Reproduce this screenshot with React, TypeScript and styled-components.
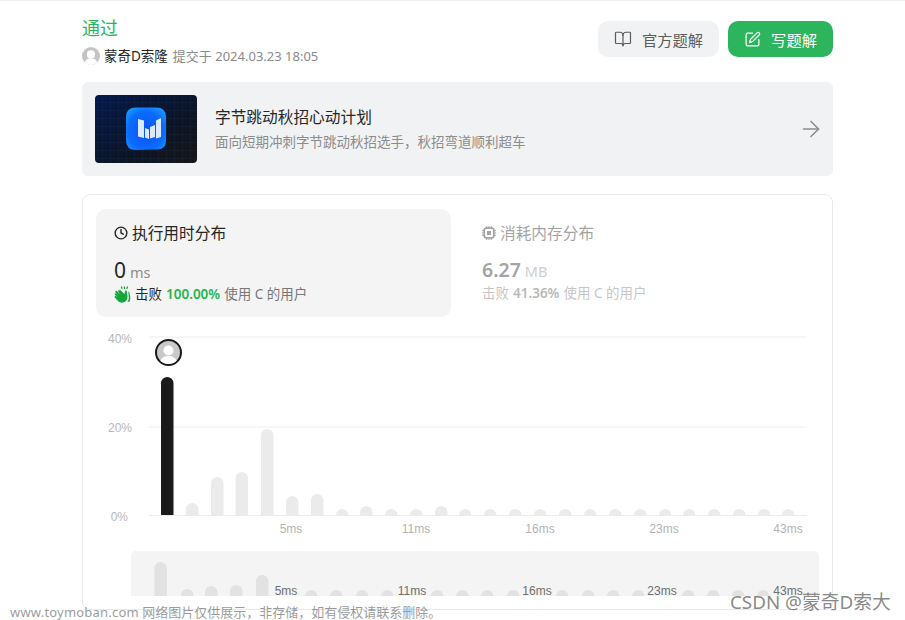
import React from "react";
import styled, { createGlobalStyle } from "styled-components";
import { ArrowRight, BookOpen, Clock, SquarePen } from "lucide-react";

const FONT = `"Noto Sans", "Noto Sans CJK SC", "Liberation Sans", sans-serif`;

const GlobalStyle = createGlobalStyle`
  html, body {
    margin: 0;
    height: 100%;
    overflow: hidden;
    background: #fff;
    font-family: ${FONT};
  }
`;

const Page = styled.div`
  position: relative;
  height: 620px;
  border-top: 1px solid #eeeeee;
  box-sizing: border-box;
  overflow: hidden;
`;

const Container = styled.main`
  width: 751px;
  margin-left: 82px;
`;

const Header = styled.header`
  display: flex;
  justify-content: space-between;
  align-items: flex-start;
  padding-top: 15px;
  height: 81px;
  box-sizing: border-box;
`;

const Status = styled.div`
  font-size: 18px;
  line-height: 24px;
  color: #2db55d;
`;

const Submitter = styled.div`
  display: flex;
  align-items: center;
  margin-top: 6px;
  font-size: 13px;
  line-height: 20px;
  color: #8a8a8a;
`;

const UserName = styled.span`
  font-size: 13.500px;
  color: #262626;
  margin: 0 5px 0 4px;
`;

const Actions = styled.div`
  display: flex;
  gap: 9px;
  margin-top: 5px;
`;

const ActionButton = styled.button<{ $primary?: boolean }>`
  display: flex;
  align-items: center;
  gap: 10px;
  height: 36px;
  padding: 0 16px;
  border: none;
  border-radius: 10px;
  font-family: ${FONT};
  font-size: 15.300px;
  background: ${(p) => (p.$primary ? "#2db55d" : "#f1f2f4")};
  color: ${(p) => (p.$primary ? "#ffffff" : "#5c5c5c")};
`;

const Banner = styled.section`
  display: flex;
  align-items: center;
  height: 94px;
  padding: 0 13px;
  box-sizing: border-box;
  background: #f1f2f4;
  border-radius: 6px;
`;

const BannerText = styled.div`
  flex: 1;
  margin-left: 18px;
`;

const BannerTitle = styled.div`
  font-size: 15.700px;
  line-height: 22px;
  color: #262626;
`;

const BannerSub = styled.div`
  margin-top: 4px;
  font-size: 13.500px;
  line-height: 20px;
  color: #8c8c8c;
`;

const BannerArrow = styled(ArrowRight)`
  color: #8c8c8c;
  margin-right: -4px;
`;

const ResultCard = styled.section`
  margin-top: 18px;
  height: 416px;
  box-sizing: border-box;
  padding: 14px 13px 0;
  border: 1px solid #eaeaea;
  border-radius: 8px;
`;

const Stats = styled.div`
  display: grid;
  grid-template-columns: 355px 354px;
  gap: 14px;
`;

const Stat = styled.div<{ $active?: boolean }>`
  height: 108px;
  box-sizing: border-box;
  padding: 13px 18px 0;
  padding-left: ${(p) => (p.$active ? 18 : 17)}px;
  border-radius: 10px;
  background: ${(p) => (p.$active ? "#f4f4f4" : "transparent")};
  opacity: ${(p) => (p.$active ? 1 : 0.42)};
`;

const StatTitle = styled.div`
  display: flex;
  align-items: center;
  gap: 4px;
  font-size: 15.700px;
  line-height: 22px;
  color: #262626;
`;

const StatValue = styled.div`
  display: flex;
  align-items: baseline;
  gap: 4px;
  margin-top: 13px;
  line-height: 26px;
`;

const Number = styled.span<{ $bold?: boolean }>`
  font-size: ${(p) => (p.$bold ? 19.500 : 21)}px;
  font-weight: ${(p) => (p.$bold ? 600 : 400)};
  color: #262626;
`;

const Unit = styled.span`
  font-size: 14.500px;
  color: #8c8c8c;
`;

const StatFoot = styled.div`
  display: flex;
  align-items: center;
  gap: 3px;
  margin-top: -1px;
  font-size: 13.500px;
  line-height: 20px;
  color: #777777;
`;

const Dark = styled.span`
  color: #262626;
`;

const Percent = styled.span<{ $green?: boolean }>`
  font-weight: 600;
  margin: 0 4px;
  color: ${(p) => (p.$green ? "#1cb84f" : "#555555")};
`;

const Chart = styled.svg`
  display: block;
  margin-top: 8px;
  font-family: "Liberation Sans", Arial, sans-serif;
  font-size: 12px;
`;

const WebNote = styled.div`
  position: absolute;
  left: 10px;
  top: 602px;
  font-size: 13px;
  line-height: 18px;
  color: rgba(110, 110, 110, 0.7);
  white-space: nowrap;
`;

const SiteName = styled.span`
  letter-spacing: 0.2px;
`;

const CsdnMark = styled.div`
  position: absolute;
  left: 730px;
  top: 588px;
  font-size: 18.800px;
  line-height: 26px;
  color: rgba(105, 105, 105, 0.8);
  white-space: nowrap;
`;

const Avatar = () => (
  <svg width="18" height="18" viewBox="0 0 18 18">
    <circle cx="9" cy="9" r="9" fill="#c4c4c4" />
    <circle cx="9" cy="7.400" r="4.100" fill="#fff" />
    <path d="M2.800 15.600c.6-3 3-4.400 6.200-4.400s5.600 1.400 6.200 4.400A9 9 0 0 1 9 18a9 9 0 0 1-6.200-2.400z" fill="#fff" />
  </svg>
);

const Thumb = () => (
  <svg width="102" height="68" viewBox="0 0 102 68">
    <defs>
      <linearGradient id="thumbBg" x1="0" y1="0" x2="1" y2="1">
        <stop offset="0" stopColor="#04194a" />
        <stop offset="0.6" stopColor="#0c1526" />
        <stop offset="1" stopColor="#161616" />
      </linearGradient>
      <radialGradient id="thumbIcon" cx="0.5" cy="0.55" r="0.75">
        <stop offset="0" stopColor="#0b50f2" />
        <stop offset="0.6" stopColor="#0a6cff" />
        <stop offset="1" stopColor="#23b0ff" />
      </radialGradient>
      <pattern id="thumbGrid" width="8" height="8" patternUnits="userSpaceOnUse">
        <path d="M8 0V8M0 8H8" stroke="#2c4a78" strokeWidth="0.6" opacity="0.4" />
      </pattern>
    </defs>
    <rect width="102" height="68" rx="4" fill="url(#thumbBg)" />
    <rect width="102" height="68" rx="4" fill="url(#thumbGrid)" />
    <path d="M41 12.500H61Q71 12.500 71 22V46Q71 55 61 54.500L41 55Q31 55 31 45V22Q31 12.500 41 12.500Z" fill="url(#thumbIcon)" />
    <path d="M43 24l6 1.500V43l-6-1.500zM50 33l4 1.500V44l-4-1.500zM55 32l5-2V42l-5 1.500zM61 25.500l5-2.500V42l-5 1.500z" fill="#dbe9ff" />
  </svg>
);

const Clap = () => (
  <svg width="18" height="18" viewBox="0 0 18 18" fill="#15a63c">
    <path d="M5.600 4.600l4.900 4.300.5-2.600c.2-1.100 1.800-1 1.900.1l.5 4.800c.3 3-1.500 5.800-4.400 6.400-1.900.4-3.700-.2-5-1.500L.8 12.400c-.8-.8.4-2 1.200-1.200l1.700 1.500-2.800-3c-.8-.9.4-2.100 1.300-1.300l2.900 2.800-3.500-3.800c-.8-.9.4-2.100 1.300-1.300l3.700 3.600-2.300-3c-.7-1 .5-2 1.300-1.100z" />
    <path d="M14.300 6.500c.5 0 .9.300 1 .8l.9 4.300c.4 2.100 0 4-1 5.400l-1.600-.4c1-1.400 1.400-3.100 1.100-5zM9.800 1.600h1.300v2.500H9.800zM13 1.300l1.200.4-.8 2.400-1.200-.4zM6.700 1.700l1.200-.4.800 2.300-1.200.4z" />
  </svg>
);

const Chip = () => (
  <svg width="14" height="14" viewBox="0 0 14 14" fill="none" stroke="#262626">
    <rect x="2.200" y="2.200" width="9.600" height="9.600" rx="2" strokeWidth="1.700" />
    <rect x="5" y="5" width="4" height="4" fill="#262626" stroke="none" />
    <path d="M4.700 0v2M7 0v2M9.300 0v2M4.700 12v2M7 12v2M9.300 12v2M0 4.700h2M0 7h2M0 9.300h2M12 4.700h2M12 7h2M12 9.300h2" strokeWidth="1" />
  </svg>
);

const barX = [161, 186, 211, 235.5, 261, 286, 311, 336, 360, 385, 410, 435, 459, 484, 509, 534, 559, 584, 609, 634, 659, 683, 708, 733, 758, 782];
const barTop = [377, 503, 477, 472, 429, 496, 494, 509, 506, 509, 509, 506, 509, 509, 509, 509, 509, 509, 509, 509, 509, 509, 509, 509, 509, 509];
const miniBars: [number, number][] = [
  [154.5, 562], [181, 589], [205, 586], [230, 585], [256, 575], [305, 590], [330, 590], [356, 590], [381, 590],
  [431, 590], [456, 590], [481, 590], [507, 590], [556, 590], [582, 590], [607, 590], [632, 590], [682, 590], [707, 590], [732, 590], [757, 590],
];
const yLabels: [string, number, number][] = [["40%", 132, 343], ["20%", 132, 432], ["0%", 128, 521]];
const xLabels: [string, number][] = [["5ms", 291], ["11ms", 416], ["16ms", 540], ["23ms", 664], ["43ms", 788]];
const miniLabels: [string, number][] = [["5ms", 286], ["11ms", 412], ["16ms", 537], ["23ms", 662], ["43ms", 788]];

// bar with a rounded top and a flat foot
const barPath = (x: number, top: number, base: number, w = 12.5) => {
  const r = Math.min(w / 2, base - top);
  return `M${x} ${base}V${top + r}A${w / 2} ${r} 0 0 1 ${x + w} ${top + r}V${base}Z`;
};

const DistributionChart = () => (
  <Chart width="723" height="276" viewBox="96 325 723 276">
    {[337, 427, 515.5].map((y) => (
      <line key={y} x1="149" x2="807" y1={y} y2={y} stroke="#ececec" />
    ))}
    {yLabels.map(([label, x, y]) => (
      <text key={label} x={x} y={y} textAnchor="end" fill="#b8b8b8">{label}</text>
    ))}
    {barX.map((x, i) => (
      <path key={x} d={barPath(x, barTop[i], 515)} fill={i === 0 ? "#1a1a1a" : "#ebebeb"} />
    ))}
    <circle cx="168.500" cy="352.500" r="12.500" fill="#c9c9c9" stroke="#1a1a1a" strokeWidth="2" />
    <circle cx="168.500" cy="350.500" r="5" fill="#fff" />
    <path d="M160.500 361c1-3.500 4-5 8-5s7 1.500 8 5a12 12 0 0 1-16 0z" fill="#fff" />
    {xLabels.map(([label, x]) => (
      <text key={label} x={x} y={533} textAnchor="middle" fill="#b3b3b3">{label}</text>
    ))}
    <path d="M136 551H814a5 5 0 0 1 5 5V596H131V556a5 5 0 0 1 5-5z" fill="#f4f4f4" />
    {miniBars.map(([x, top]) => (
      <path key={x} d={barPath(x, top, 596)} fill="#e2e2e2" />
    ))}
    {miniLabels.map(([label, x]) => (
      <text key={label} x={x} y={595} textAnchor="middle" fill="#6e6e6e">{label}</text>
    ))}
  </Chart>
);

export default function App() {
  return (
    <Page>
      <GlobalStyle />
      <Container>
        <Header>
          <div>
            <Status>通过</Status>
            <Submitter>
              <Avatar />
              <UserName>蒙奇D索隆</UserName>
              提交于 2024.03.23 18:05
            </Submitter>
          </div>
          <Actions>
            <ActionButton>
              <BookOpen size={18} strokeWidth={1.6} />
              官方题解
            </ActionButton>
            <ActionButton $primary>
              <SquarePen size={17} strokeWidth={1.7} />
              写题解
            </ActionButton>
          </Actions>
        </Header>
        <Banner>
          <Thumb />
          <BannerText>
            <BannerTitle>字节跳动秋招心动计划</BannerTitle>
            <BannerSub>面向短期冲刺字节跳动秋招选手，秋招弯道顺利超车</BannerSub>
          </BannerText>
          <BannerArrow size={26} strokeWidth={1.4} />
        </Banner>
        <ResultCard>
          <Stats>
            <Stat $active>
              <StatTitle>
                <Clock size={14} strokeWidth={2.4} />
                执行用时分布
              </StatTitle>
              <StatValue>
                <Number>0</Number>
                <Unit>ms</Unit>
              </StatValue>
              <StatFoot>
                <Clap />
                <span>
                  <Dark>击败</Dark>
                  <Percent $green>100.00%</Percent>
                  使用 C 的用户
                </span>
              </StatFoot>
            </Stat>
            <Stat>
              <StatTitle>
                <Chip />
                消耗内存分布
              </StatTitle>
              <StatValue>
                <Number $bold>6.27</Number>
                <Unit>MB</Unit>
              </StatValue>
              <StatFoot>
                <span>
                  击败
                  <Percent>41.36%</Percent>
                  使用 C 的用户
                </span>
              </StatFoot>
            </Stat>
          </Stats>
          <DistributionChart />
        </ResultCard>
      </Container>
      <WebNote>
        <SiteName>www.toymoban.com</SiteName> 网络图片仅供展示，非存储，如有侵权请联系删除。
      </WebNote>
      <CsdnMark>CSDN @蒙奇D索大</CsdnMark>
    </Page>
  );
}
